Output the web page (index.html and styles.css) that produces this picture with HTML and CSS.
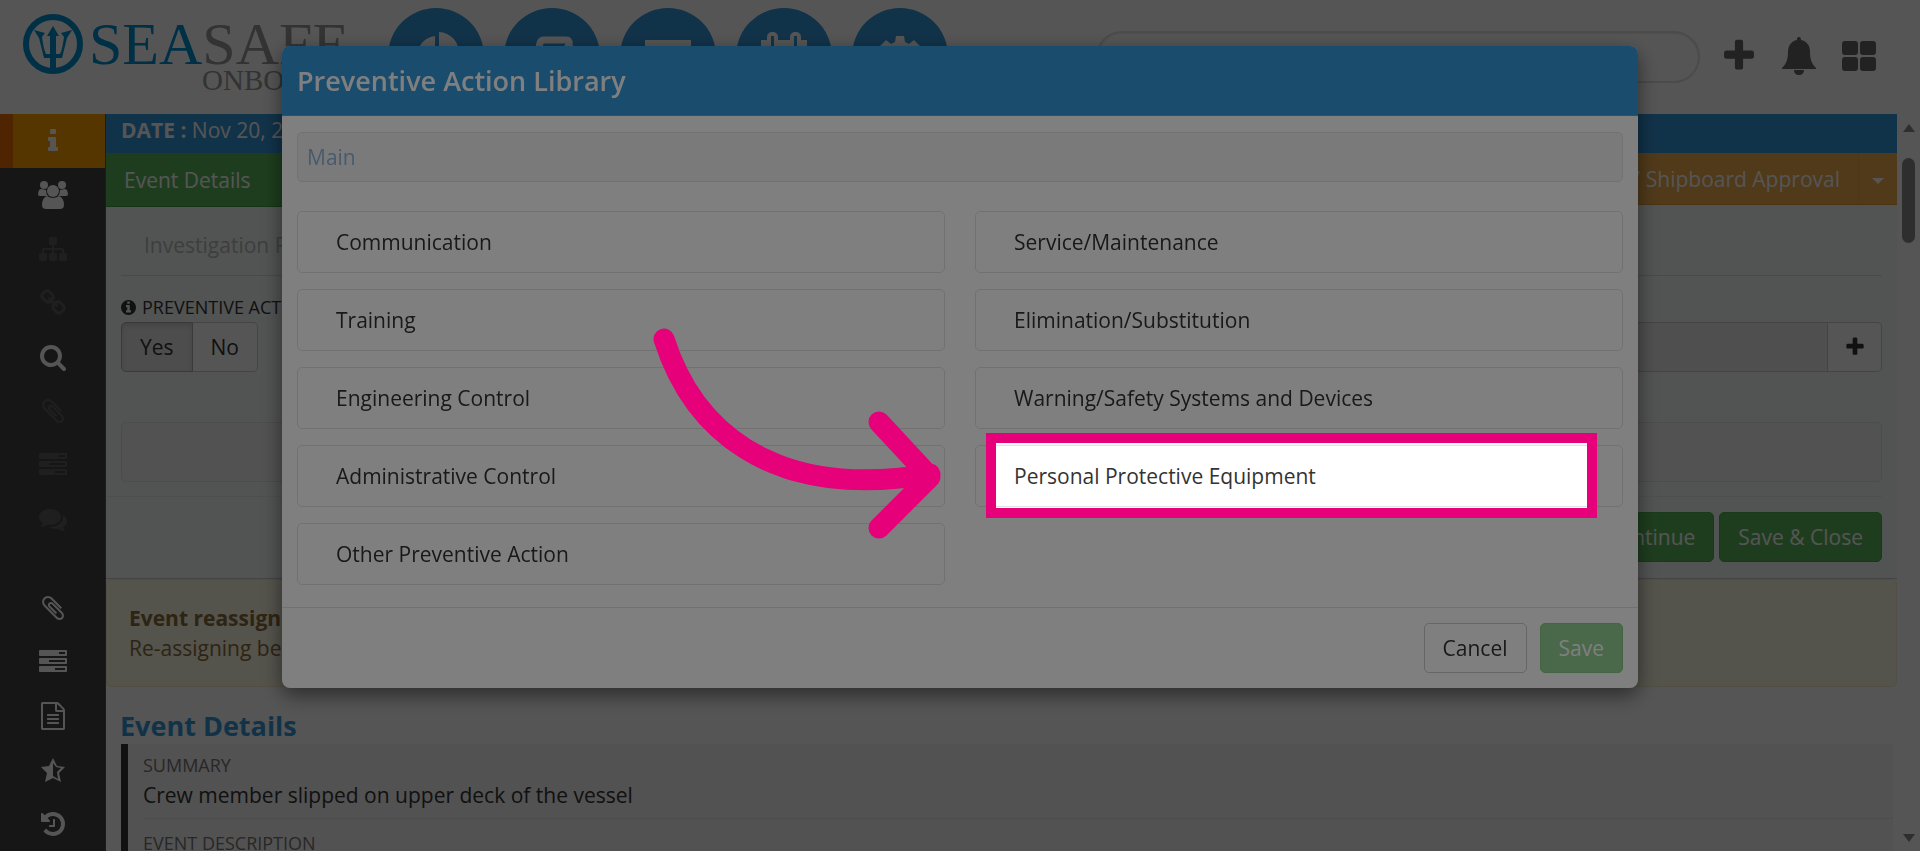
FILE: index.html
```html
<!DOCTYPE html>
<html lang="en">
<head>
  <meta charset="UTF-8">
  <title>Preventive Action Library</title>
  <link rel="stylesheet" href="styles.css">
</head>
<body>
  <svg class="sprite" aria-hidden="true">
    <symbol id="i-plus" viewBox="0 0 1792 1792"><path d="M1600 736v192q0 40-28 68t-68 28h-416v416q0 40-28 68t-68 28h-192q-40 0-68-28t-28-68v-416h-416q-40 0-68-28t-28-68v-192q0-40 28-68t68-28h416v-416q0-40 28-68t68-28h192q40 0 68 28t28 68v416h416q40 0 68 28t28 68z"/></symbol>
    <symbol id="i-clip" viewBox="0 0 1792 1792"><path d="M1596 1385q0 117-79 196t-196 79q-135 0-235-100l-777-776q-113-115-113-271 0-159 110-270t269-111q158 0 273 113l605 606q10 10 10 22 0 16-30.5 46.5t-46.5 30.5q-13 0-23-10l-606-607q-79-77-181-77-106 0-179 75t-73 181q0 105 76 181l776 777q63 63 145 63 64 0 106-42t42-106q0-82-63-145l-581-581q-26-24-60-24-29 0-48 19t-19 48q0 32 25 59l410 410q10 10 10 22 0 16-31 47t-47 31q-12 0-22-10l-410-410q-63-61-63-149 0-82 57-139t139-57q88 0 149 63l581 581q100 98 100 235z"/></symbol>
    <symbol id="i-tasks" viewBox="0 0 1792 1792"><path d="M1024 1408h640v-128h-640v128zm-384-512h1024v-128h-1024v128zm640-512h384v-128h-384v128zm512 832v256q0 26-19 45t-45 19h-1664q-26 0-45-19t-19-45v-256q0-26 19-45t45-19h1664q26 0 45 19t19 45zm0-512v256q0 26-19 45t-45 19h-1664q-26 0-45-19t-19-45v-256q0-26 19-45t45-19h1664q26 0 45 19t19 45zm0-512v256q0 26-19 45t-45 19h-1664q-26 0-45-19t-19-45v-256q0-26 19-45t45-19h1664q26 0 45 19t19 45z"/></symbol>
  </svg>

  <header class="topbar">
    <a href="#" class="logo" aria-label="SeaSafe Onboard">
      <svg class="logo-mark" viewBox="0 0 62 62">
        <circle cx="31" cy="31" r="27" fill="none" stroke="currentColor" stroke-width="6"/>
        <g fill="currentColor">
          <path d="M31 13l6 10h-3v35h-6V23h-3z"/>
          <path d="M12 17l11 3-3 4c1 7 2 13 4 17h14c2-4 3-10 4-17l-3-4 11-3-5 8-5 20H22l-5-20z"/>
        </g>
      </svg>
      <span class="logo-text">
        <span class="logo-name"><b>SEA</b>SAFE</span>
        <span class="logo-sub">ONBOARD</span>
      </span>
    </a>
    <nav class="modules">
      <a href="#" aria-label="Reports"><svg viewBox="0 0 50 50"><path d="M24 5v21l14 15A20 20 0 1 1 24 5z"/><path d="M28 1a21 21 0 0 1 20 22H28z"/></svg></a>
      <a href="#" aria-label="Forms"><svg viewBox="0 0 50 50"><path fill="none" stroke="currentColor" stroke-width="7" d="M37 22v16a5 5 0 0 1-5 5H12a5 5 0 0 1-5-5l6-26q1-3 4-3h22q4 0 3 4l-2 5"/><path d="M22 32l2-8 20-12 5 6-20 12z"/></svg></a>
      <a href="#" aria-label="Messages"><svg viewBox="0 0 50 50"><path d="M2 9h46v30H2z"/></svg></a>
      <a href="#" aria-label="Calendar"><svg viewBox="0 0 50 50"><path d="M2 9h46v36H2z"/><rect x="8" y="1" width="11" height="16" rx="5"/><rect x="31" y="1" width="11" height="16" rx="5"/><path class="cut" d="M12 5h3v11h-3zM35 5h3v11h-3zM7 21h36v20H7z"/></svg></a>
      <a href="#" aria-label="Settings"><svg viewBox="0 0 50 50"><path fill-rule="evenodd" d="M21 5h8l1 6 4 2 5-4 6 6-4 5 2 4 6 1v8l-6 1-2 4 4 5-6 6-5-4-4 2-1 6h-8l-1-6-4-2-5 4-6-6 4-5-2-4-6-1v-8l6-1 2-4-4-5 6-6 5 4 4-2zM25 21a8 8 0 1 0 0 16 8 8 0 0 0 0-16z"/></svg></a>
    </nav>
    <input type="search" class="search" aria-label="Search">
    <div class="actions">
      <button aria-label="Add"><svg viewBox="0 0 1792 1792"><use href="#i-plus"/></svg></button>
      <button aria-label="Notifications"><svg viewBox="0 0 38 38"><path d="M19 0q2 0 2 3c6 1 9 6 9 12 0 8 2 12 6 16v1H2v-1c4-4 6-8 6-16 0-6 3-11 9-12 0-3 1-3 2-3zM14 33h10c0 3-2 5-5 5s-5-2-5-5z"/></svg></button>
      <button aria-label="Apps"><svg viewBox="0 0 38 38"><rect x="2" y="4" width="16" height="14" rx="3"/><rect x="20" y="4" width="16" height="14" rx="3"/><rect x="2" y="20" width="16" height="14" rx="3"/><rect x="20" y="20" width="16" height="14" rx="3"/></svg></button>
    </div>
  </header>

  <div class="layout">
    <nav class="sidebar">
      <a href="#" class="active" aria-label="Information"><svg viewBox="0 0 1792 1792"><path d="M1216 1344v128q0 26-19 45t-45 19h-512q-26 0-45-19t-19-45v-128q0-26 19-45t45-19h64v-384h-64q-26 0-45-19t-19-45v-128q0-26 19-45t45-19h384q26 0 45 19t19 45v576h64q26 0 45 19t19 45zm-128-1152v192q0 26-19 45t-45 19h-256q-26 0-45-19t-19-45v-192q0-26 19-45t45-19h256q26 0 45 19t19 45z"/></svg></a>
      <a href="#" aria-label="People"><svg class="wide" viewBox="0 0 30 28"><circle cx="6" cy="4" r="4"/><circle cx="24" cy="4" r="4"/><path d="M0 15q0-7 3-7l5 1q0 4 2 6H2q-2 0-2-2zM30 15q0-7-3-7l-5 1q0 4-2 6h8q2 0 2-2z"/><circle cx="15" cy="10" r="6"/><path d="M9 15q6 4 12 0 5 2 5 9 0 4-4 4H8q-4 0-4-4 0-7 5-9z"/></svg></a>
      <a href="#" class="off" aria-label="Structure"><svg viewBox="0 0 1792 1792"><path d="M1792 1248v320q0 40-28 68t-68 28h-320q-40 0-68-28t-28-68v-320q0-40 28-68t68-28h96v-192h-512v192h96q40 0 68 28t28 68v320q0 40-28 68t-68 28h-320q-40 0-68-28t-28-68v-320q0-40 28-68t68-28h96v-192h-512v192h96q40 0 68 28t28 68v320q0 40-28 68t-68 28h-320q-40 0-68-28t-28-68v-320q0-40 28-68t68-28h96v-192q0-52 38-90t90-38h512v-192h-96q-40 0-68-28t-28-68v-320q0-40 28-68t68-28h320q40 0 68 28t28 68v320q0 40-28 68t-68 28h-96v192h512q52 0 90 38t38 90v192h96q40 0 68 28t28 68z"/></svg></a>
      <a href="#" class="off" aria-label="Links"><svg viewBox="0 0 1792 1792"><path d="M1520 1216q0-40-28-68l-208-208q-28-28-68-28-42 0-72 32 3 3 19 18.500t21.500 21.500 15 19 13 25.500 3.500 27.500q0 40-28 68t-68 28q-15 0-27.500-3.500t-25.500-13-19-15-21.500-21.500-18.500-19q-33 31-33 73 0 40 28 68l206 207q27 27 68 27 40 0 68-26l147-146q28-28 28-67zm-703-705q0-40-28-68l-206-207q-28-28-68-28-39 0-68 27l-147 146q-28 28-28 67 0 40 28 68l208 208q27 27 68 27 42 0 72-31-3-3-19-18.500t-21.500-21.500-15-19-13-25.500-3.500-27.500q0-40 28-68t68-28q15 0 27.500 3.500t25.500 13 19 15 21.500 21.500 18.500 19q33-31 33-73zm895 705q0 120-85 203l-147 146q-83 83-203 83-121 0-204-85l-206-207q-83-83-83-203 0-123 88-209l-88-88q-86 88-208 88-120 0-204-84l-208-208q-84-84-84-204t85-203l147-146q83-83 203-83 121 0 204 85l206 207q83 83 83 203 0 123-88 209l88 88q86-88 208-88 120 0 204 84l208 208q84 84 84 204z"/></svg></a>
      <a href="#" aria-label="Investigation"><svg viewBox="0 0 1792 1792"><path d="M1216 832q0-185-131.500-316.500t-316.500-131.500-316.500 131.500-131.500 316.500 131.500 316.500 316.500 131.500 316.500-131.500 131.500-316.500zm512 832q0 52-38 90t-90 38q-54 0-90-38l-343-342q-179 124-399 124-143 0-273.500-55.500t-225-150-150-225-55.500-273.500 55.500-273.500 150-225 225-150 273.500-55.500 273.500 55.500 225 150 150 225 55.500 273.500q0 220-124 399l343 343q37 37 37 90z"/></svg></a>
      <a href="#" class="off" aria-label="Attachments"><svg viewBox="0 0 1792 1792"><use href="#i-clip"/></svg></a>
      <a href="#" class="off" aria-label="Tasks"><svg viewBox="0 0 1792 1792"><use href="#i-tasks"/></svg></a>
      <a href="#" class="off" aria-label="Comments"><svg viewBox="0 0 1792 1792"><path d="M1408 768q0 139-94 257t-256.500 186.500-353.500 68.500q-86 0-176-16-124 88-278 128-36 9-86 16h-3q-11 0-20.500-8t-11.500-21q-1-3-1-6.500t.5-6.500 2-6l2.500-5 3.500-5.500 4-5 4.500-5 4-4.500q5-6 23-25t26-29.500 22.500-29 25-38.500 20.500-44q-124-72-195-177t-71-224q0-139 94-257t256.500-186.500 353.500-68.500 353.500 68.500 256.500 186.500 94 257zm384 256q0 120-71 224.500t-195 176.500q10 24 20.500 44t25 38.500 22.500 29 26 29.500 23 25q1 1 4 4.500t4.500 5 4 5 3.500 5.500l2.500 5 2 6 .5 6.500-1 6.500q-3 14-13 22t-22 7q-50-7-86-16-154-40-278-128-90 16-176 16-271 0-472-132 58 4 88 4 161 0 309-45t264-129q125-92 192-212t67-254q0-77-23-152 129 71 204 178t75 230z"/></svg></a>
      <div class="sidebar-group">
        <a href="#" aria-label="Files"><svg viewBox="0 0 1792 1792"><use href="#i-clip"/></svg></a>
        <a href="#" aria-label="All tasks"><svg viewBox="0 0 1792 1792"><use href="#i-tasks"/></svg></a>
        <a href="#" aria-label="Report"><svg viewBox="0 0 1792 1792"><path d="M1596 380q28 28 48 76t20 88v1152q0 40-28 68t-68 28h-1344q-40 0-68-28t-28-68v-1600q0-40 28-68t68-28h896q40 0 88 20t76 48zm-444-244v376h376q-10-29-22-41l-313-313q-12-12-41-22zm384 1528v-1024h-416q-40 0-68-28t-28-68v-416h-768v1536h1280zm-1024-864q0-14 9-23t23-9h704q14 0 23 9t9 23v64q0 14-9 23t-23 9h-704q-14 0-23-9t-9-23v-64zm736 224q14 0 23 9t9 23v64q0 14-9 23t-23 9h-704q-14 0-23-9t-9-23v-64q0-14 9-23t23-9h704zm0 256q14 0 23 9t9 23v64q0 14-9 23t-23 9h-704q-14 0-23-9t-9-23v-64q0-14 9-23t23-9h704z"/></svg></a>
        <a href="#" aria-label="Rating"><svg viewBox="0 0 28 28"><path fill-rule="evenodd" d="M14 2l4 8 8 1-6 6 2 9-8-4-8 4 2-9-6-6 8-1zM14 7v13l5 3-1-7 4-4-5-1z"/></svg></a>
        <a href="#" aria-label="History"><svg viewBox="0 0 1792 1792"><path d="M1664 896q0 156-61 298t-164 245-245 164-298 61q-172 0-327-72.500t-264-204.500q-7-10-6.500-22.500t8.500-20.500l137-138q10-9 25-9 16 2 23 12 73 95 179 147t225 52q104 0 198.500-40.500t163.500-109.500 109.500-163.500 40.500-198.500-40.500-198.500-109.500-163.500-163.500-109.500-198.500-40.500q-98 0-188 35.500t-160 101.500l137 138q31 30 14 69-17 40-59 40h-448q-26 0-45-19t-19-45v-448q0-42 40-59 39-17 69 14l130 129q107-101 244.500-156.500t284.500-55.500q156 0 298 61t245 164 164 245 61 298zm-640-288v448q0 14-9 23t-23 9h-320q-14 0-23-9t-9-23v-64q0-14 9-23t23-9h224v-352q0-14 9-23t23-9h64q14 0 23 9t9 23z"/></svg></a>
      </div>
    </nav>

    <main class="content">
      <div class="date-bar"><b>DATE :</b> Nov 20, 2023</div>
      <div class="steps">
        <button class="step step-green">Event Details</button>
        <button class="step step-orange">Vessel / Shipboard Approval</button>
        <button class="step step-orange step-caret" aria-label="More"><span class="caret"></span></button>
      </div>

      <section class="panel">
        <div class="panel-title">Investigation Report</div>
        <div class="form-row">
          <div class="field">
            <div class="label">
              <svg viewBox="0 0 1536 1536"><path d="M1024 1248v-160q0-14-9-23t-23-9h-96v-512q0-14-9-23t-23-9h-320q-14 0-23 9t-9 23v160q0 14 9 23t23 9h96v320h-96q-14 0-23 9t-9 23v160q0 14 9 23t23 9h448q14 0 23-9t9-23zm-128-896v-160q0-14-9-23t-23-9h-192q-14 0-23 9t-9 23v160q0 14 9 23t23 9h192q14 0 23-9t9-23zm640 416q0 209-103 385.500t-279.500 279.500-385.500 103-385.500-103-279.500-279.500-103-385.500 103-385.500 279.500-279.500 385.500-103 385.500 103 279.500 279.500 103 385.500z"/></svg>
              PREVENTIVE ACTION
            </div>
            <div class="toggle">
              <button class="on">Yes</button><button>No</button>
            </div>
          </div>
          <div class="picker">
            <input type="text" aria-label="Preventive action" disabled>
            <button aria-label="Add action"><svg viewBox="0 0 1792 1792"><use href="#i-plus"/></svg></button>
          </div>
        </div>
        <textarea class="notes" aria-label="Notes" disabled></textarea>
        <div class="panel-buttons">
          <button class="btn btn-green">Save &amp; Continue</button>
          <button class="btn btn-green">Save &amp; Close</button>
        </div>
      </section>

      <div class="alert">
        <b>Event reassignment</b><br>
        Re-assigning between users
      </div>

      <h2>Event Details</h2>
      <dl class="details">
        <dt>SUMMARY</dt>
        <dd>Crew member slipped on upper deck of the vessel</dd>
        <dt>EVENT DESCRIPTION</dt>
      </dl>
    </main>

    <div class="scrollbar">
      <span class="arrow-up"></span>
      <span class="thumb"></span>
      <span class="arrow-down"></span>
    </div>
  </div>

  <div class="backdrop">
    <div class="modal" role="dialog" aria-labelledby="modal-title">
      <h1 class="modal-header" id="modal-title">Preventive Action Library</h1>
      <div class="modal-body">
        <div class="breadcrumb"><a href="#">Main</a></div>
        <div class="library">
          <button class="item">Communication</button>
          <button class="item">Service/Maintenance</button>
          <button class="item">Training</button>
          <button class="item">Elimination/Substitution</button>
          <button class="item">Engineering Control</button>
          <button class="item">Warning/Safety Systems and Devices</button>
          <button class="item">Administrative Control</button>
          <div class="target">
            <button class="item">Personal Protective Equipment</button>
            <div class="spotlight"></div>
            <svg class="pointer" viewBox="0 0 300 225"><path d="M18 19C45 104 120 182 284 154M233 102L284 157L233 208"/></svg>
          </div>
          <button class="item">Other Preventive Action</button>
        </div>
      </div>
      <div class="modal-footer">
        <button class="btn btn-plain">Cancel</button>
        <button class="btn btn-green" disabled>Save</button>
      </div>
    </div>
  </div>
</body>
</html>
```
FILE: styles.css
```css
* {
  box-sizing: border-box;
}
body {
  margin: 0;
  height: 100vh;
  display: flex;
  flex-direction: column;
  overflow: hidden;
  background: #fff;
  color: #333;
  font: 21px/30px "Open Sans", sans-serif;
}
button, input, textarea {
  font: inherit;
  color: inherit;
  margin: 0;
}
a {
  color: inherit;
  text-decoration: none;
}
svg {
  display: block;
  fill: currentColor;
}
.sprite {
  display: none;
}

/* top bar */
.topbar {
  height: 114px;
  flex: none;
  display: flex;
  align-items: flex-start;
  padding: 8px 42px 0 22px;
}
.logo {
  display: flex;
  width: 366px;
  flex: none;
  gap: 5px;
  color: #0090d0;
}
.logo-mark {
  width: 62px;
  height: 62px;
  margin-top: 5px;
}
.logo-text {
  display: flex;
  flex-direction: column;
  font-family: "Liberation Serif", serif;
  color: #999;
}
.logo-name {
  font-size: 60px;
  line-height: 60px;
  margin-top: 6px;
}
.logo-name b {
  font-weight: normal;
  color: #0090d0;
}
.logo-sub {
  font-size: 29px;
  line-height: 24px;
  margin-left: 113px;
  margin-top: -6px;
}
.modules {
  display: flex;
  gap: 20px;
}
.modules a {
  width: 96px;
  height: 96px;
  border-radius: 50%;
  background: #3498db;
  color: #fff;
  display: flex;
  align-items: center;
  justify-content: center;
}
.modules svg {
  width: 50px;
  height: 50px;
}
.modules .cut {
  fill: #3498db;
}
.search {
  width: 604px;
  height: 52px;
  margin: 23px 0 0 auto;
  border: 2px solid #e0e0e0;
  border-radius: 26px;
  background: #fff;
  box-shadow: inset 0 1px 2px rgba(0, 0, 0, 0.08);
}
.actions {
  display: flex;
  gap: 22px;
  margin: 29px 0 0 20px;
  color: #666;
}
.actions button {
  border: 0;
  padding: 0;
  background: none;
}
.actions svg {
  width: 38px;
  height: 38px;
}

.layout {
  flex: 1;
  min-height: 0;
  display: flex;
}

/* side menu */
.sidebar {
  width: 106px;
  flex: none;
  background: #444;
  border-right: 1px solid #555;
  color: #fff;
}
.sidebar a {
  display: flex;
  height: 54px;
  align-items: center;
  justify-content: center;
}
.sidebar svg {
  width: 28px;
  height: 28px;
}
.sidebar svg.wide {
  width: 30px;
}
.sidebar .active {
  background: linear-gradient(to right, #ea7000 13px, #ffa000 13px);
}
.sidebar .off {
  color: #5e5e5e;
}
.sidebar-group {
  margin-top: 35px;
}

/* page content */
.content {
  flex: 1;
  min-width: 0;
}
.date-bar {
  padding: 1px 15px 8px;
  background: #3498db;
  color: #fff;
}
.steps {
  display: flex;
  align-items: flex-start;
  background: #f5faf8;
}
.step {
  height: 52px;
  border: 0;
  padding: 0 18px;
  color: #fff;
}
.step-green {
  flex: 1;
  height: 54px;
  text-align: left;
  background: #5cb85c;
  border-bottom: 1px solid #449d44;
}
.step-orange {
  background: #f0ad4e;
  border-bottom: 1px solid #e09a35;
}
.step-caret {
  width: 39px;
  padding: 0;
  border-left: 1px solid #e8a444;
}
.caret {
  display: inline-block;
  border: 6px solid transparent;
  border-top-color: #fff;
  border-bottom: 0;
  vertical-align: middle;
}
.panel {
  background: #f5faf8;
  border-bottom: 1px solid #ccc;
  padding: 0 15px 16px;
}
.panel-title {
  padding: 23px 23px 15px;
  color: #bbb;
  border-bottom: 1px solid #ddd;
}
.form-row {
  display: flex;
  align-items: flex-end;
  margin-top: 18px;
}
.field {
  width: 300px;
}
.label {
  display: flex;
  align-items: center;
  gap: 6px;
  font-size: 18px;
  line-height: 26px;
  white-space: nowrap;
}
.label svg {
  width: 15px;
  height: 15px;
}
.toggle {
  display: flex;
  margin-top: 2px;
}
.toggle button {
  height: 50px;
  padding: 0 18px;
  background: #fff;
  border: 1px solid #ccc;
  border-radius: 0 5px 5px 0;
}
.toggle button.on {
  background: #e6e6e6;
  border-color: #adadad;
  border-radius: 5px 0 0 5px;
  box-shadow: inset 0 3px 5px rgba(0, 0, 0, 0.125);
}
.toggle button + button {
  border-left: 0;
}
.picker {
  flex: 1;
  display: flex;
}
.picker input {
  flex: 1;
  height: 50px;
  background: #eee;
  border: 1px solid #ccc;
}
.picker button {
  width: 54px;
  display: flex;
  align-items: center;
  justify-content: center;
  background: #fff;
  border: 1px solid #ccc;
  border-left: 0;
  border-radius: 0 5px 5px 0;
}
.picker svg {
  width: 22px;
  height: 22px;
}
.notes {
  display: block;
  width: 100%;
  height: 60px;
  margin: 50px 0 14px;
  background: #f5f5f5;
  border: 1px solid #e3e3e3;
  border-radius: 5px;
  resize: none;
}
.panel-buttons {
  display: flex;
  justify-content: flex-end;
  gap: 5px;
  margin-left: -15px;
  padding-top: 15px;
  border-top: 1px solid #e8eeec;
}
.btn {
  height: 50px;
  padding: 0 18px;
  border: 1px solid transparent;
  border-radius: 5px;
}
.btn-green {
  background: #5cb85c;
  border-color: #4cae4c;
  color: #fff;
}
.btn-green:disabled {
  opacity: 0.65;
}
.btn-plain {
  background: #fff;
  border-color: #ccc;
}
.alert {
  padding: 23px 22px;
  background: #fcf8e3;
  border: 1px solid #faebcc;
  border-radius: 5px;
  color: #8a6d3b;
}
h2 {
  margin: 20px 15px 0 14px;
  font-size: 27px;
  line-height: 37px;
  color: #3498db;
}
.details {
  margin: 0 4px 0 15px;
  padding: 8px 0 15px 15px;
  background: #f5f5f5;
  border-left: 7px solid #333;
}
.details dt {
  font-size: 18px;
  line-height: 26px;
  color: #777;
}
.details dd {
  margin: 2px 0 11px;
  padding-bottom: 8px;
  border-bottom: 1px solid #e8e8e8;
}
.scrollbar {
  width: 23px;
  flex: none;
  display: flex;
  flex-direction: column;
  align-items: center;
  padding: 10px 0 9px;
  color: #8a8a8a;
}
.arrow-up, .arrow-down {
  border: 6px solid transparent;
}
.arrow-up {
  border-top: 0;
  border-bottom: 8px solid;
}
.arrow-down {
  border-bottom: 0;
  border-top: 8px solid;
  margin-top: auto;
}
.thumb {
  width: 13px;
  height: 85px;
  margin-top: 26px;
  border-radius: 7px;
  background: currentColor;
}

/* dialog */
.backdrop {
  position: fixed;
  inset: 0;
  padding: 46px 282px;
  background: rgba(0, 0, 0, 0.33);
}
.modal {
  background: #fff;
  border-radius: 8px;
  box-shadow: 0 7px 20px rgba(0, 0, 0, 0.5);
}
.modal-header {
  margin: 0;
  padding: 15px;
  font-size: 27px;
  line-height: 39px;
  font-weight: 600;
  color: #fff;
  background: #3498db;
  border-bottom: 1px solid #5aa5dc;
  border-radius: 8px 8px 0 0;
}
.modal-body {
  padding: 16px 15px 22px;
}
.breadcrumb {
  padding: 9px;
  margin-bottom: 29px;
  background: #f5f5f5;
  border: 1px solid #e3e3e3;
  border-radius: 5px;
  color: #91b5d8;
}
.library {
  display: grid;
  grid-template-columns: 1fr 1fr;
  gap: 16px 30px;
}
.item {
  display: block;
  width: 100%;
  height: 62px;
  padding: 0 38px;
  text-align: left;
  background: #fff;
  border: 1px solid #e3e3e3;
  border-radius: 5px;
}
.target {
  position: relative;
}
/* the ring darkens everything around the highlighted entry */
.spotlight {
  position: absolute;
  z-index: 1;
  inset: -12px 26px -11px 11px;
  border: 10px solid #e6007a;
  box-shadow: 0 0 0 3000px rgba(0, 0, 0, 0.5);
  pointer-events: none;
}
.pointer {
  position: absolute;
  z-index: 2;
  top: -125px;
  right: 100%;
  width: 300px;
  height: 225px;
  margin-right: 29px;
  fill: none;
  stroke: #e6007a;
  stroke-width: 21px;
  stroke-linecap: round;
  stroke-linejoin: round;
  pointer-events: none;
}
.modal-footer {
  display: flex;
  justify-content: flex-end;
  gap: 13px;
  padding: 15px;
  border-top: 1px solid #e3e3e3;
}
```
